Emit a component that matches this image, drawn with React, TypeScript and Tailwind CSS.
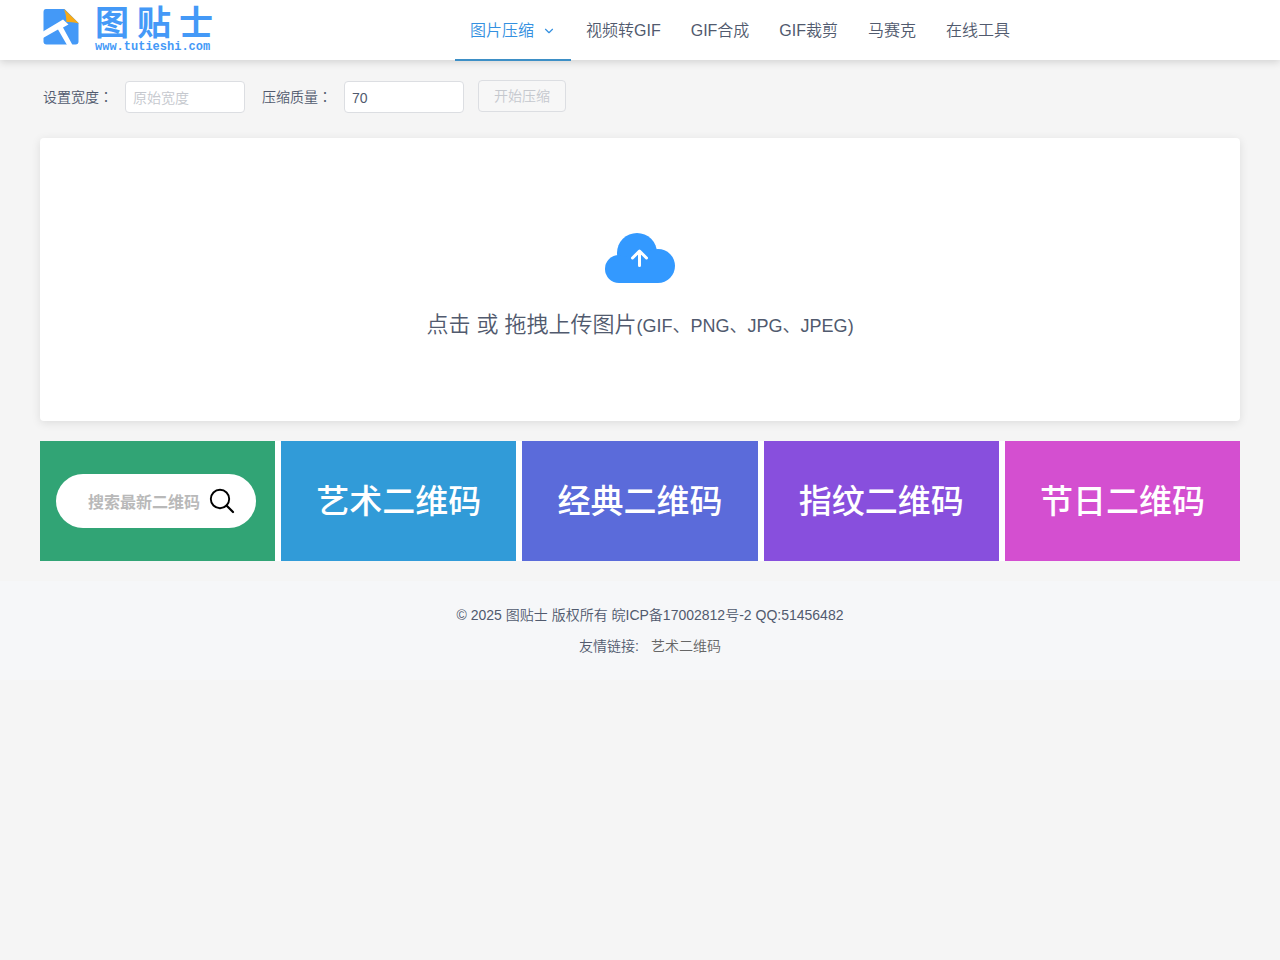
import { ChevronDown } from "lucide-react";
import { clsx } from "clsx";

const navItems = [
  { label: "图片压缩", active: true },
  { label: "视频转GIF" },
  { label: "GIF合成" },
  { label: "GIF裁剪" },
  { label: "马赛克" },
  { label: "在线工具" },
];

const qrCategories = [
  { label: "艺术二维码", className: "bg-[#319bd8]" },
  { label: "经典二维码", className: "bg-[#5b6bda]" },
  { label: "指纹二维码", className: "bg-[#884fdd]" },
  { label: "节日二维码", className: "bg-[#d44fd0]" },
];

function Logo() {
  return (
    <a aria-label="图贴士" className="flex w-[415px] shrink-0 items-start gap-4 pl-[3px] pt-1 text-[#4499f7]" href="#">
      <svg aria-hidden="true" className="mt-[5px] size-9" viewBox="0 0 36 36">
        <path d="M3 0H21.500L35.500 14V32.500Q35.500 35.500 32.500 35.500H3.500Q0.500 35.500 0.500 32.500V3Q0.500 0 3 0Z" fill="#4499f7" />
        <path d="M21 0L36 14.500Q30 12.500 23.500 13Q23.500 6 21 0Z" fill="#f9ab16" />
        <path d="M0 22.500L20 10.500L25.500 15.500L20 18.500L29.500 36H24L15 20.500L0 29Z" fill="#fff" />
      </svg>
      <span className="flex flex-col">
        <span className="flex h-[35px] items-center gap-2 pt-0.5 text-[34px] font-bold leading-none">
          <span>图</span>
          <span>贴</span>
          <span>士</span>
        </span>
        <span className="font-['Liberation_Mono',monospace] text-xs font-bold leading-4">www.tutieshi.com</span>
      </span>
    </a>
  );
}

function Header() {
  return (
    <header className="h-15 bg-white shadow-[0_2px_8px_rgba(0,0,0,0.15)]">
      <div className="mx-auto flex max-w-[1200px] items-start">
        <Logo />
        <nav aria-label="主导航" className="flex whitespace-nowrap text-base font-[350]">
          {navItems.map((item) => (
            <a
              aria-current={item.active ? "page" : undefined}
              className={clsx(
                "flex h-[61px] items-center border-b-2 px-[15px] pt-0.5",
                item.active ? "border-[#3d8fc6] text-[#3490e0]" : "border-transparent text-[#515a6e]",
              )}
              href="#"
              key={item.label}
            >
              {item.label}
              {item.active ? <ChevronDown aria-hidden="true" className="ml-2 size-3.5" /> : null}
            </a>
          ))}
        </nav>
      </div>
    </header>
  );
}

// The TC face centres the full-width colon in its box.
function Colon() {
  return <span className="font-['Noto_Sans_CJK_TC',sans-serif]">：</span>;
}

function CompressForm() {
  const inputClass =
    "mt-px h-8 w-[120px] rounded border border-[#dcdee2] bg-white px-[7px] pt-0.5 text-[#515a6e] outline-none placeholder:text-[#c5c8ce]";

  return (
    <form className="flex h-[78px] items-start pl-[3px] pt-5 text-sm font-[350]">
      <label className="w-[82px] leading-8" htmlFor="width">
        设置宽度
        <Colon />
      </label>
      <input className={inputClass} id="width" placeholder="原始宽度" type="text" />
      <label className="ml-[17px] w-[82px] leading-8" htmlFor="quality">
        压缩质量
        <Colon />
      </label>
      <input className={inputClass} defaultValue="70" id="quality" type="text" />
      <button
        className="ml-[14px] h-8 rounded border border-[#dcdee2] bg-[#f7f7f7] px-[15px] text-[#c5c8ce]"
        disabled
        type="button"
      >
        开始压缩
      </button>
    </form>
  );
}

function UploadPanel() {
  return (
    <button
      className="flex h-[283px] w-full flex-col items-center rounded-sm bg-white pt-[95px] font-[350] shadow-[0_2px_10px_rgba(0,0,0,0.1)]"
      type="button"
    >
      <svg aria-hidden="true" className="h-[50px] w-[70px]" viewBox="0 0 70 50">
        <g fill="#3399ff">
          <circle cx="32" cy="20" r="20" />
          <circle cx="14" cy="36" r="14" />
          <circle cx="53" cy="33" r="17" />
          <path d="M14 24H53V50H14Z" />
        </g>
        <path
          d="M34.500 32.500V18.500M27.500 25L34.500 18L41.500 25"
          fill="none"
          stroke="#fff"
          strokeLinecap="round"
          strokeLinejoin="round"
          strokeWidth="3"
        />
      </svg>
      <span className="mt-6 text-[22px] leading-9">
        点击 或 拖拽上传图片<span className="text-lg">(GIF、PNG、JPG、JPEG)</span>
      </span>
    </button>
  );
}

function QrCategories() {
  return (
    <section className="mt-5 grid grid-cols-5 gap-1.5 bg-white">
      <a className="flex h-[120px] items-center bg-[#31a475] px-4" href="#">
        <span className="flex h-[54px] w-[200px] items-center justify-between rounded-full bg-white pl-8 pr-[21px]">
          <span className="pt-1 text-base font-bold text-[#b9b9b9]">搜索最新二维码</span>
          <svg aria-hidden="true" className="size-[26px] text-black" fill="none" viewBox="0 0 26 26">
            <circle cx="11" cy="11" r="9.200" stroke="currentColor" strokeWidth="1.900" />
            <path d="M17.500 17.500L24 24" stroke="currentColor" strokeLinecap="round" strokeWidth="2.200" />
          </svg>
        </span>
      </a>
      {qrCategories.map((category) => (
        <a
          className={clsx(
            "flex h-[120px] items-center justify-center pt-0.5 text-[33px] font-medium text-white",
            category.className,
          )}
          href="#"
          key={category.label}
        >
          {category.label}
        </a>
      ))}
    </section>
  );
}

function Footer() {
  return (
    <footer className="mt-5 bg-[#f6f7f9] pb-[18px] pl-5 pt-[19px] text-center text-sm font-[350] leading-[31px]">
      <p>© 2025 图贴士 版权所有 皖ICP备17002812号-2 QQ:51456482</p>
      <p>
        友情链接:
        <a className="ml-3 text-[#666]" href="#">
          艺术二维码
        </a>
      </p>
    </footer>
  );
}

export default function App() {
  return (
    <div className="min-h-screen bg-[#f5f5f5] font-['Liberation_Sans','Noto_Sans_CJK_SC',sans-serif] text-[#515a6e]">
      <Header />
      <main className="mx-auto max-w-[1200px]">
        <CompressForm />
        <UploadPanel />
        <QrCategories />
      </main>
      <Footer />
    </div>
  );
}
